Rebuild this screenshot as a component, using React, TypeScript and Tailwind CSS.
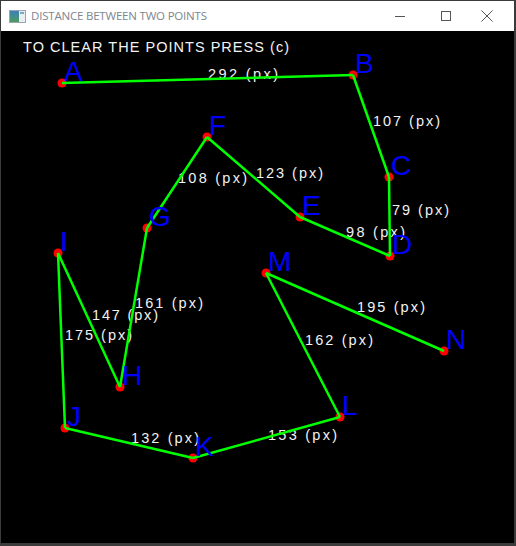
import React from "react";

type P = { x: number; y: number };
const pts: Record<string, P> = {
  A: { x: 62, y: 83 },
  B: { x: 353, y: 75 },
  C: { x: 389, y: 177 },
  D: { x: 390, y: 256 },
  E: { x: 300, y: 217 },
  F: { x: 207, y: 137 },
  G: { x: 147, y: 228 },
  H: { x: 120, y: 387 },
  I: { x: 58, y: 253 },
  J: { x: 65, y: 428 },
  K: { x: 193, y: 458 },
  L: { x: 340, y: 417 },
  M: { x: 266, y: 273 },
  N: { x: 444, y: 351 },
};
const order = ["A", "B", "C", "D", "E", "F", "G", "H", "I", "J", "K", "L", "M", "N"];
const chain: [string, string][] = [
  ["A", "B"], ["B", "C"], ["C", "D"], ["D", "E"], ["E", "F"], ["F", "G"], ["G", "H"],
  ["H", "I"], ["I", "J"], ["J", "K"], ["K", "L"], ["L", "M"], ["M", "N"],
];

const dist: { t: string; x: number; y: number; w: number }[] = [
  { t: "292 (px)", x: 208, y: 79, w: 70 },
  { t: "107 (px)", x: 373, y: 126, w: 67 },
  { t: "108 (px)", x: 178, y: 183, w: 69 },
  { t: "123 (px)", x: 256, y: 178, w: 67 },
  { t: "79 (px)", x: 392, y: 215, w: 57 },
  { t: "98 (px)", x: 346, y: 237, w: 59 },
  { t: "161 (px)", x: 135, y: 308, w: 68 },
  { t: "147 (px)", x: 92, y: 320, w: 66 },
  { t: "175 (px)", x: 65, y: 340, w: 67 },
  { t: "195 (px)", x: 357, y: 312, w: 68 },
  { t: "162 (px)", x: 305, y: 345, w: 68 },
  { t: "132 (px)", x: 131, y: 443, w: 68 },
  { t: "153 (px)", x: 268, y: 440, w: 69 },
];

export default function App() {
  return (
    <div className="w-[516px] h-[546px] bg-[#3b3b3b] flex flex-col p-px pb-[3px] pr-[2px]">
      <div className="h-[30px] bg-white flex items-center shrink-0" style={{ fontFamily: "'Open Sans', 'Noto Sans', sans-serif" }}>
        <div className="ml-[8px] w-[17px] h-[13px] border border-[#9aa5b1] bg-[#e8eef4] flex">
          <div className="w-[9px] h-full bg-gradient-to-b from-[#3f7fb8] to-[#4e9a5a]" />
          <div className="flex-1 flex flex-col justify-start pt-[1px] pl-[1px] gap-[1px]">
            <div className="h-[2px] w-[4px] bg-[#7ab]" />
          </div>
        </div>
        <span className="ml-[5px] text-[11.5px] text-[#7d8590] tracking-[-0.2px]">DISTANCE BETWEEN TWO POINTS</span>
        <div className="ml-auto flex items-center h-full">
          <div className="w-[46px] h-full flex items-center justify-center">
            <div className="w-[10px] h-px bg-[#555]" />
          </div>
          <div className="w-[46px] h-full flex items-center justify-center">
            <div className="w-[10px] h-[10px] border border-[#555]" />
          </div>
          <div className="w-[36px] mr-[9px] h-full flex items-center justify-center">
            <svg width="12" height="12" viewBox="0 0 12 12">
              <path d="M0.5 0.5 L11.5 11.5 M11.5 0.5 L0.5 11.5" stroke="#555" strokeWidth="1" />
            </svg>
          </div>
        </div>
      </div>
      <div className="flex-1 bg-black relative">
        <svg width="513" height="512" viewBox="1 31 513 512" className="block">
          <text
            x={23}
            y={52}
            fill="#f2f2f2"
            fontSize={14.5}
            fontFamily="'Liberation Sans', sans-serif"
            textLength={266}
            lengthAdjust="spacing"
          >
            TO CLEAR THE POINTS PRESS (c)
          </text>
          {dist.map((d) => (
            <text
              key={d.t + d.x}
              x={d.x}
              y={d.y}
              fill="#f2f2f2"
              fontSize={14.5}
              fontFamily="'Liberation Sans', sans-serif"
              textLength={d.w}
              lengthAdjust="spacing"
            >
              {d.t}
            </text>
          ))}
          {order.map((k) => (
            <circle key={"c" + k} cx={pts[k].x} cy={pts[k].y} r={4.5} fill="#ff0000" />
          ))}
          {chain.map(([a, b]) => (
            <line
              key={a + b}
              x1={pts[a].x}
              y1={pts[a].y}
              x2={pts[b].x}
              y2={pts[b].y}
              stroke="#00ff00"
              strokeWidth={2.5}
            />
          ))}
          {order.map((k) => (
            <text
              key={"l" + k}
              x={pts[k].x + 2}
              y={pts[k].y - 2}
              fill="#0000ff"
              fontSize={28}
              fontFamily="'Liberation Sans', sans-serif"
            >
              {k}
            </text>
          ))}
        </svg>
      </div>
    </div>
  );
}
